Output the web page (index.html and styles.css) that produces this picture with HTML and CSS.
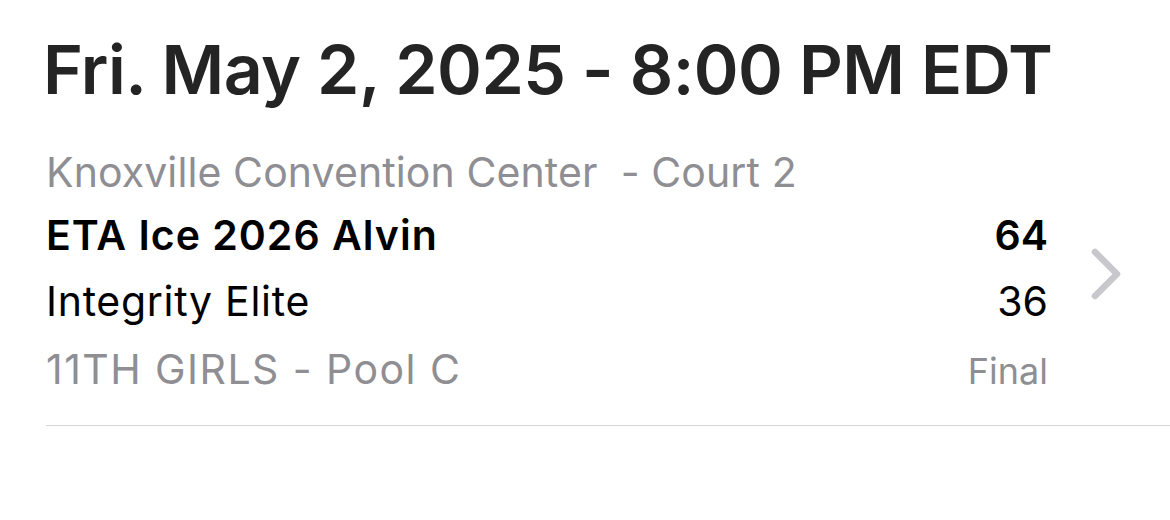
FILE: index.html
```html
<!DOCTYPE html>
<html>
<head>
<meta charset="utf-8">
<link rel="stylesheet" href="styles.css">
</head>
<body>
<div class="page">
  <h1 class="title">Fri. May 2, 2025 - 8:00 PM EDT</h1>
  <div class="game">
    <div class="info">
      <div class="row venue"><span>Knoxville Convention Center&nbsp; - Court 2</span></div>
      <div class="row team winner"><span>ETA Ice 2026 Alvin</span><span class="score">64</span></div>
      <div class="row team"><span>Integrity Elite</span><span class="score">36</span></div>
      <div class="row meta"><span>11TH GIRLS - Pool C</span><span class="status">Final</span></div>
    </div>
    <svg class="chevron" width="32" height="54" viewBox="0 0 32 54">
      <path d="M5 5 L27 27 L5 49" fill="none" stroke="#c7c7cc" stroke-width="6.5" stroke-linecap="round" stroke-linejoin="round"/>
    </svg>
  </div>
</div>
</body>
</html>
```
FILE: styles.css
```css
html, body {
  margin: 0;
  padding: 0;
  background: #ffffff;
}
.page {
  font-family: Inter, "Liberation Sans", sans-serif;
  padding-top: 35px;
}
.title {
  margin: 0 0 0 43px;
  font-size: 68px;
  font-weight: 600;
  line-height: 68px;
  color: #242424;
  letter-spacing: -0.55px;
}
.game {
  display: flex;
  align-items: center;
  margin-left: 46px;
  margin-top: 39px;
  padding-bottom: 19px;
  border-bottom: 1px solid #d6d6d8;
}
.info {
  flex: 1;
  display: flex;
  flex-direction: column;
}
.row {
  display: flex;
  justify-content: space-between;
  align-items: baseline;
  font-size: 41px;
  line-height: 66px;
}
.venue {
  color: #8e8e93;
  line-height: 60px;
  letter-spacing: 0.1px;
}
.team {
  color: #000000;
  letter-spacing: 0.7px;
}
.winner {
  font-weight: 600;
  letter-spacing: 1px;
}
.meta {
  color: #8e8e93;
  line-height: 70px;
  letter-spacing: 1.45px;
}
.score {
  letter-spacing: 0;
}
.status {
  font-size: 36px;
  letter-spacing: 0;
}
.chevron {
  margin-left: 42px;
  margin-right: 48px;
  flex: none;
}
```
